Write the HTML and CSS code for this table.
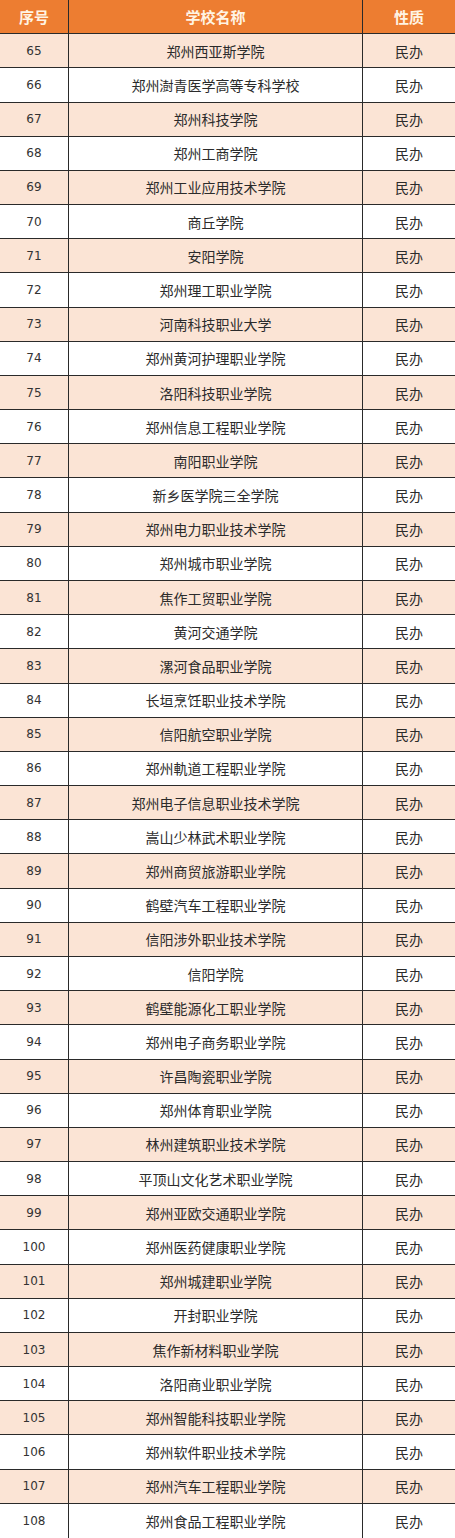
FILE: index.html
```html
<!DOCTYPE html>
<html lang="zh">
<head>
<meta charset="utf-8">
<link rel="stylesheet" href="styles.css">
</head>
<body>
<div class="table">
<div class="c h n">序号</div><div class="c h s">学校名称</div><div class="c h t">性质</div>
<div class="c o n">65</div><div class="c o s">郑州西亚斯学院</div><div class="c o t">民办</div>
<div class="c n">66</div><div class="c s">郑州澍青医学高等专科学校</div><div class="c t">民办</div>
<div class="c o n">67</div><div class="c o s">郑州科技学院</div><div class="c o t">民办</div>
<div class="c n">68</div><div class="c s">郑州工商学院</div><div class="c t">民办</div>
<div class="c o n">69</div><div class="c o s">郑州工业应用技术学院</div><div class="c o t">民办</div>
<div class="c n">70</div><div class="c s">商丘学院</div><div class="c t">民办</div>
<div class="c o n">71</div><div class="c o s">安阳学院</div><div class="c o t">民办</div>
<div class="c n">72</div><div class="c s">郑州理工职业学院</div><div class="c t">民办</div>
<div class="c o n">73</div><div class="c o s">河南科技职业大学</div><div class="c o t">民办</div>
<div class="c n">74</div><div class="c s">郑州黄河护理职业学院</div><div class="c t">民办</div>
<div class="c o n">75</div><div class="c o s">洛阳科技职业学院</div><div class="c o t">民办</div>
<div class="c n">76</div><div class="c s">郑州信息工程职业学院</div><div class="c t">民办</div>
<div class="c o n">77</div><div class="c o s">南阳职业学院</div><div class="c o t">民办</div>
<div class="c n">78</div><div class="c s">新乡医学院三全学院</div><div class="c t">民办</div>
<div class="c o n">79</div><div class="c o s">郑州电力职业技术学院</div><div class="c o t">民办</div>
<div class="c n">80</div><div class="c s">郑州城市职业学院</div><div class="c t">民办</div>
<div class="c o n">81</div><div class="c o s">焦作工贸职业学院</div><div class="c o t">民办</div>
<div class="c n">82</div><div class="c s">黄河交通学院</div><div class="c t">民办</div>
<div class="c o n">83</div><div class="c o s">漯河食品职业学院</div><div class="c o t">民办</div>
<div class="c n">84</div><div class="c s">长垣烹饪职业技术学院</div><div class="c t">民办</div>
<div class="c o n">85</div><div class="c o s">信阳航空职业学院</div><div class="c o t">民办</div>
<div class="c n">86</div><div class="c s">郑州軌道工程职业学院</div><div class="c t">民办</div>
<div class="c o n">87</div><div class="c o s">郑州电子信息职业技术学院</div><div class="c o t">民办</div>
<div class="c n">88</div><div class="c s">嵩山少林武术职业学院</div><div class="c t">民办</div>
<div class="c o n">89</div><div class="c o s">郑州商贸旅游职业学院</div><div class="c o t">民办</div>
<div class="c n">90</div><div class="c s">鹤壁汽车工程职业学院</div><div class="c t">民办</div>
<div class="c o n">91</div><div class="c o s">信阳涉外职业技术学院</div><div class="c o t">民办</div>
<div class="c n">92</div><div class="c s">信阳学院</div><div class="c t">民办</div>
<div class="c o n">93</div><div class="c o s">鹤壁能源化工职业学院</div><div class="c o t">民办</div>
<div class="c n">94</div><div class="c s">郑州电子商务职业学院</div><div class="c t">民办</div>
<div class="c o n">95</div><div class="c o s">许昌陶瓷职业学院</div><div class="c o t">民办</div>
<div class="c n">96</div><div class="c s">郑州体育职业学院</div><div class="c t">民办</div>
<div class="c o n">97</div><div class="c o s">林州建筑职业技术学院</div><div class="c o t">民办</div>
<div class="c n">98</div><div class="c s">平顶山文化艺术职业学院</div><div class="c t">民办</div>
<div class="c o n">99</div><div class="c o s">郑州亚欧交通职业学院</div><div class="c o t">民办</div>
<div class="c n">100</div><div class="c s">郑州医药健康职业学院</div><div class="c t">民办</div>
<div class="c o n">101</div><div class="c o s">郑州城建职业学院</div><div class="c o t">民办</div>
<div class="c n">102</div><div class="c s">开封职业学院</div><div class="c t">民办</div>
<div class="c o n">103</div><div class="c o s">焦作新材料职业学院</div><div class="c o t">民办</div>
<div class="c n">104</div><div class="c s">洛阳商业职业学院</div><div class="c t">民办</div>
<div class="c o n">105</div><div class="c o s">郑州智能科技职业学院</div><div class="c o t">民办</div>
<div class="c n">106</div><div class="c s">郑州软件职业技术学院</div><div class="c t">民办</div>
<div class="c o n">107</div><div class="c o s">郑州汽车工程职业学院</div><div class="c o t">民办</div>
<div class="c n last">108</div><div class="c s last">郑州食品工程职业学院</div><div class="c t last">民办</div>
</div>
</body>
</html>
```

FILE: styles.css
```css
html, body {
  margin: 0;
  padding: 0;
  background: #ffffff;
}
.table {
  display: grid;
  grid-template-columns: 69px 294px 1fr;
  grid-template-rows: repeat(45, 1fr);
  width: 455px;
  height: 1538px;
  font-family: "Noto Sans CJK SC", "Noto Sans", sans-serif;
  font-size: 14px;
  color: #2b2b2b;
}
.c {
  display: flex;
  align-items: center;
  justify-content: center;
  border-bottom: 1px solid #2a2a2a;
  box-sizing: border-box;
  background: #ffffff;
  white-space: nowrap;
}
.n, .s {
  border-right: 1px solid #2a2a2a;
}
.n {
  font-family: "DejaVu Sans", sans-serif;
  font-size: 12px;
  color: #333333;
}
.o {
  background: #fbe4d5;
}
.h {
  background: #ed7d31;
  color: #fff4e4;
  font-weight: bold;
  font-size: 15px;
  font-family: "Noto Sans CJK SC", sans-serif;
}
.last {
  border-bottom: none;
}
```
